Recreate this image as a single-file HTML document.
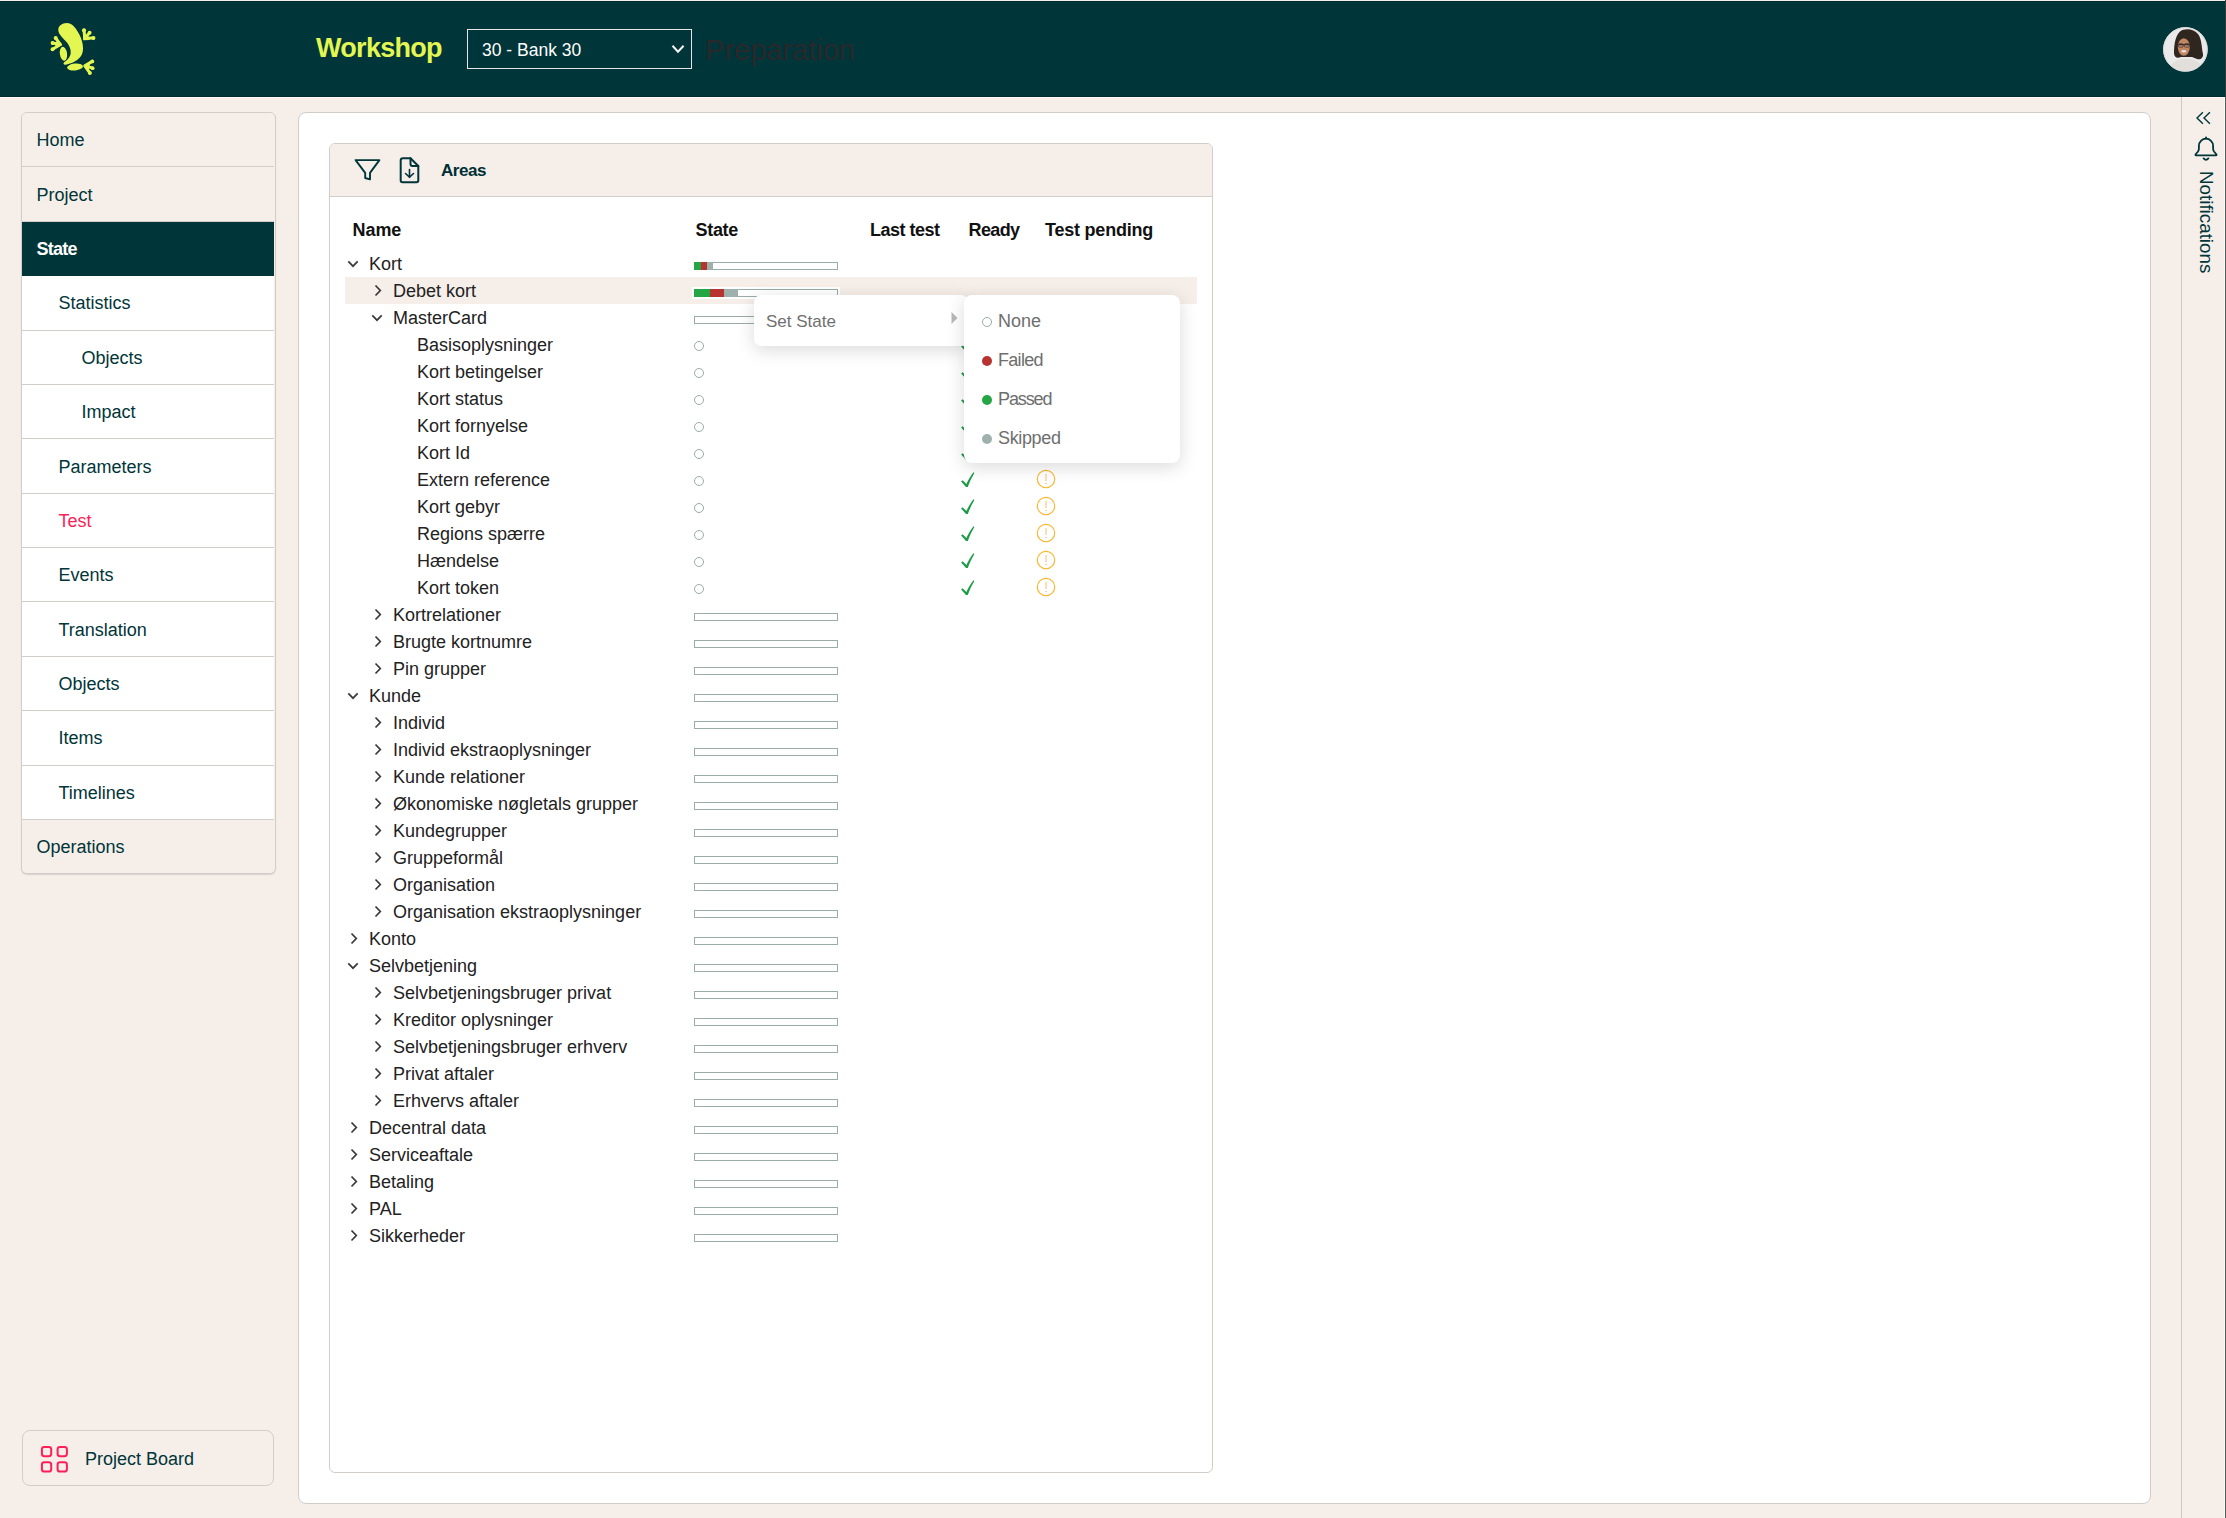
<!DOCTYPE html><html><head><meta charset="utf-8"><style>
*{box-sizing:border-box;margin:0;padding:0}
html,body{width:2226px;height:1518px;overflow:hidden;background:#f5eee9;font-family:"Liberation Sans", sans-serif;}
.a{position:absolute;white-space:nowrap}
.t{position:absolute;white-space:nowrap;line-height:1}
</style></head><body><div class="a" style="left:0;top:0;width:2226px;height:1px;background:#f2eeed"></div>
<div class="a" style="left:0;top:1px;width:2226px;height:96px;background:#003539"></div>
<div class="a" style="left:0;top:1px;width:2226px;height:1px;background:#002a2e"></div>
<div class="a" style="left:0;top:96px;width:2226px;height:1px;background:#002a2e"></div>
<div class="a" style="left:0;top:97px;width:2226px;height:1px;background:#fdf9f6"></div>
<svg class="a" style="left:45px;top:18px" width="56" height="62" viewBox="0 0 1371 1518">
<g fill="#e4f651" stroke="#e4f651">
<path stroke="none" d="M530 120 C420 120 320 190 325 300 C330 390 420 470 505 565 C595 665 645 770 625 880 C605 980 525 1040 475 1080 C435 1110 450 1150 500 1145 C640 1120 830 1040 900 900 C960 780 930 580 850 420 C780 280 680 120 530 120 Z"/>
<ellipse stroke="none" cx="452" cy="875" rx="88" ry="172" transform="rotate(-8 452 875)"/>
<ellipse stroke="none" cx="735" cy="1200" rx="195" ry="85" transform="rotate(-6 735 1200)"/>
<g stroke-width="74" stroke-linecap="round" stroke-linejoin="round" fill="none">
<path d="M380 650 L262 492 M380 650 L185 612 M380 650 L185 765"/>
<path d="M975 495 L955 300 M975 495 L1092 362 M975 495 L1185 488"/>
<path d="M975 1170 L1158 1062 M975 1170 L1165 1228 M975 1170 L1098 1345"/>
</g>
<g stroke="none">
<circle cx="262" cy="492" r="50"/><circle cx="185" cy="612" r="48"/><circle cx="185" cy="765" r="48"/>
<circle cx="955" cy="300" r="50"/><circle cx="1092" cy="362" r="48"/><circle cx="1185" cy="488" r="50"/>
<circle cx="1158" cy="1062" r="48"/><circle cx="1165" cy="1228" r="48"/><circle cx="1098" cy="1345" r="48"/>
<path d="M405 665 L300 555 L245 625 L260 735 Z"/>
<path d="M930 420 L935 545 L1100 540 L1030 410 Z"/>
<path d="M945 1170 L1085 1085 L1100 1215 L1040 1275 Z"/>
</g>
</g></svg>
<div class="t" style="left:316px;top:35.24px;font-size:27px;color:#e4f651;font-weight:bold;letter-spacing:-0.7px">Workshop</div>
<div class="a" style="left:467px;top:29px;width:225px;height:40px;border:1.5px solid #e6e6e6;"></div>
<div class="t" style="left:482px;top:41.99px;font-size:17.5px;color:#ffffff;font-weight:normal;">30 - Bank 30</div>
<svg class="a" style="left:668px;top:42px" width="20" height="14" viewBox="0 0 20 14"><polyline points="4.5,3.8 10,9.7 15.6,3.8" fill="none" stroke="#f4f4f4" stroke-width="2"/></svg>
<div class="t" style="left:705px;top:36.45px;font-size:29px;color:#29282b;font-weight:normal;">Preparation</div>
<svg class="a" style="left:2162px;top:26px" width="47" height="47" viewBox="0 0 47 47">
<defs><clipPath id="avc"><circle cx="23.4" cy="23.4" r="21.3"/></clipPath></defs>
<circle cx="23.4" cy="23.4" r="22.2" fill="#e2e2e2"/>
<g clip-path="url(#avc)">
<rect x="0" y="0" width="47" height="47" fill="#ebeaea"/>
<path d="M18 5.5 C22 2 32 2.5 36 8 C40 13 39.5 22 41 28 C41.5 32 38.5 34 35 33 L30 31 L19 31 C15 33 12 31 12 27 C12 20 13 10 18 5.5 Z" fill="#2f2620"/>
<ellipse cx="21.8" cy="21" rx="6" ry="8.8" fill="#c08764"/>
<path d="M15.8 18.6 L28 18.6" stroke="#3a2b25" stroke-width="1.4"/>
<rect x="16.2" y="17.6" width="5" height="3.6" rx="1.2" fill="none" stroke="#4a3a33" stroke-width="0.8"/>
<rect x="22.3" y="17.6" width="5" height="3.6" rx="1.2" fill="none" stroke="#4a3a33" stroke-width="0.8"/>
<ellipse cx="21.8" cy="25.3" rx="2.6" ry="1.2" fill="#e8dede"/>
<path d="M6 47 C8 37 15 32.5 23 32.8 C31 32.5 38 35 41 43 L41 47 Z" fill="#e2dfdb"/>
</g>
<circle cx="23.4" cy="23.4" r="21.9" fill="none" stroke="#dcdcdc" stroke-width="1"/>
</svg>
<div class="a" style="left:21px;top:112px;width:254.5px;height:762.32px;border:1px solid #d3cdc9;border-radius:6px;overflow:hidden;background:#f5eee9;box-shadow:0 1px 1px rgba(0,0,0,0.12)">
<div class="a" style="left:0;top:0.00px;width:252px;height:54.38px;background:#f5eee9;border-bottom:1px solid #d3cdc9;"></div>
<div class="t" style="left:14.5px;top:18.26px;font-size:18px;color:#003539;font-weight:normal;">Home</div>
<div class="a" style="left:0;top:54.38px;width:252px;height:54.38px;background:#f5eee9;border-bottom:1px solid #d3cdc9;"></div>
<div class="t" style="left:14.5px;top:72.64px;font-size:18px;color:#003539;font-weight:normal;">Project</div>
<div class="a" style="left:0;top:108.76px;width:252px;height:54.38px;background:#003539;"></div>
<div class="t" style="left:14.5px;top:127.02px;font-size:18px;color:#ffffff;font-weight:bold;letter-spacing:-0.75px;">State</div>
<div class="a" style="left:0;top:163.14px;width:252px;height:54.38px;background:#ffffff;border-bottom:1px solid #d3cdc9;"></div>
<div class="t" style="left:36.5px;top:181.40px;font-size:18px;color:#003539;font-weight:normal;">Statistics</div>
<div class="a" style="left:0;top:217.52px;width:252px;height:54.38px;background:#ffffff;border-bottom:1px solid #d3cdc9;"></div>
<div class="t" style="left:59.5px;top:235.78px;font-size:18px;color:#003539;font-weight:normal;">Objects</div>
<div class="a" style="left:0;top:271.90px;width:252px;height:54.38px;background:#ffffff;border-bottom:1px solid #d3cdc9;"></div>
<div class="t" style="left:59.5px;top:290.16px;font-size:18px;color:#003539;font-weight:normal;">Impact</div>
<div class="a" style="left:0;top:326.28px;width:252px;height:54.38px;background:#ffffff;border-bottom:1px solid #d3cdc9;"></div>
<div class="t" style="left:36.5px;top:344.54px;font-size:18px;color:#003539;font-weight:normal;">Parameters</div>
<div class="a" style="left:0;top:380.66px;width:252px;height:54.38px;background:#ffffff;border-bottom:1px solid #d3cdc9;"></div>
<div class="t" style="left:36.5px;top:398.92px;font-size:18px;color:#fc1f57;font-weight:normal;">Test</div>
<div class="a" style="left:0;top:435.04px;width:252px;height:54.38px;background:#ffffff;border-bottom:1px solid #d3cdc9;"></div>
<div class="t" style="left:36.5px;top:453.30px;font-size:18px;color:#003539;font-weight:normal;">Events</div>
<div class="a" style="left:0;top:489.42px;width:252px;height:54.38px;background:#ffffff;border-bottom:1px solid #d3cdc9;"></div>
<div class="t" style="left:36.5px;top:507.68px;font-size:18px;color:#003539;font-weight:normal;">Translation</div>
<div class="a" style="left:0;top:543.80px;width:252px;height:54.38px;background:#ffffff;border-bottom:1px solid #d3cdc9;"></div>
<div class="t" style="left:36.5px;top:562.06px;font-size:18px;color:#003539;font-weight:normal;">Objects</div>
<div class="a" style="left:0;top:598.18px;width:252px;height:54.38px;background:#ffffff;border-bottom:1px solid #d3cdc9;"></div>
<div class="t" style="left:36.5px;top:616.44px;font-size:18px;color:#003539;font-weight:normal;">Items</div>
<div class="a" style="left:0;top:652.56px;width:252px;height:54.38px;background:#ffffff;border-bottom:1px solid #d3cdc9;"></div>
<div class="t" style="left:36.5px;top:670.82px;font-size:18px;color:#003539;font-weight:normal;">Timelines</div>
<div class="a" style="left:0;top:706.94px;width:252px;height:54.38px;background:#f5eee9;"></div>
<div class="t" style="left:14.5px;top:725.20px;font-size:18px;color:#003539;font-weight:normal;">Operations</div>
</div>
<div class="a" style="left:22px;top:1430px;width:251.5px;height:55.5px;border:1px solid #d3cdc9;border-radius:8px;background:#f5eee9"></div>
<svg class="a" style="left:40px;top:1445px" width="30" height="30" viewBox="0 0 30 30"><g fill="none" stroke="#ff1f58" stroke-width="2">
<rect x="1.9" y="1.9" width="9.3" height="9.3" rx="2.4"/><rect x="17.6" y="1.9" width="9.3" height="9.3" rx="2.4"/>
<rect x="1.9" y="17.3" width="9.3" height="9.3" rx="2.4"/><rect x="17.6" y="17.3" width="9.3" height="9.3" rx="2.4"/></g></svg>
<div class="t" style="left:85px;top:1449.76px;font-size:18px;color:#003539;font-weight:normal;">Project Board</div>
<div class="a" style="left:298px;top:112px;width:1852.5px;height:1391.5px;background:#fff;border:1px solid #d3cdc9;border-radius:8px"></div>
<div class="a" style="left:2181px;top:97px;width:1px;height:1421px;background:#cfc9c5"></div>
<div class="a" style="left:2225px;top:0;width:1px;height:97px;background:#363838"></div>
<div class="a" style="left:2225px;top:97px;width:1px;height:1421px;background:#565b5b"></div>
<div class="a" style="left:2224px;top:98px;width:1px;height:1420px;background:#fcf8f5"></div>
<svg class="a" style="left:2186px;top:100px" width="40" height="30" viewBox="0 0 40 30"><g fill="none" stroke="#003539" stroke-width="1.4"><polyline points="16.9,12.2 11,18 16.9,23.8"/><polyline points="23.9,12.2 18,18 23.9,23.8"/></g></svg>
<svg class="a" style="left:2186px;top:130px" width="40" height="40" viewBox="0 0 40 40"><g fill="none" stroke="#003539" stroke-width="1.8" stroke-linejoin="round" stroke-linecap="round"><path d="M10 25.3 L30 25.3 Q31 25.3 30.3 24.3 L28 21.5 Q27.1 20.3 27.1 18.5 L27.1 15.8 A7.1 7.1 0 0 0 12.9 15.8 L12.9 18.5 Q12.9 20.3 12 21.5 L9.7 24.3 Q9 25.3 10 25.3 Z"/><path d="M20 7.3 L20 8.6"/><path d="M17.6 28.4 Q20 31.2 22.4 28.4"/></g></svg>
<div class="t" style="left:2198px;top:171px;font-size:18.8px;color:#003539;transform-origin:0 0;transform:translate(16.7px,0) rotate(90deg)">Notifications</div>
<div class="a" style="left:329px;top:143px;width:884px;height:1330px;background:#fff;border:1px solid #d3cdc9;border-radius:6px;overflow:hidden"><div class="a" style="left:0;top:0;width:882px;height:52.7px;background:#f5eee9;border-bottom:1px solid #d3cdc9"></div></div>
<svg class="a" style="left:352px;top:156px" width="30" height="28" viewBox="0 0 30 28"><path d="M3.6 4.1 L27.4 4.1 L18 16.9 L18 23.4 L13.2 22 L13.2 16.9 Z" fill="none" stroke="#003539" stroke-width="1.9" stroke-linejoin="round"/></svg>
<svg class="a" style="left:398px;top:156px" width="24" height="30" viewBox="0 0 24 30"><g fill="none" stroke="#003539" stroke-width="2" stroke-linejoin="round" stroke-linecap="round"><path d="M5 2.2 L12.5 2.2 L20.3 10 L20.3 24.5 Q20.3 26.3 18.5 26.3 L4.5 26.3 Q2.7 26.3 2.7 24.5 L2.7 4.5 Q2.7 2.2 5 2.2Z"/><path d="M12.5 2.2 L12.5 8 Q12.5 10 14.5 10 L20.3 10"/></g><g fill="none" stroke="#003539" stroke-width="1.6" stroke-linecap="round"><path d="M11.5 13.5 L11.5 21"/><path d="M7.5 17.5 L11.5 21.2 L15.5 17.5"/></g></svg>
<div class="t" style="left:441px;top:161.51px;font-size:17px;color:#002f35;font-weight:bold;letter-spacing:-0.45px">Areas</div>
<div class="t" style="left:352.5px;top:221.16px;font-size:18px;color:#111111;font-weight:bold;letter-spacing:-0.05px">Name</div>
<div class="t" style="left:695.5px;top:221.16px;font-size:18px;color:#111111;font-weight:bold;letter-spacing:-0.3px">State</div>
<div class="t" style="left:870px;top:221.16px;font-size:18px;color:#111111;font-weight:bold;letter-spacing:-0.5px">Last test</div>
<div class="t" style="left:968.5px;top:221.16px;font-size:18px;color:#111111;font-weight:bold;letter-spacing:-0.6px">Ready</div>
<div class="t" style="left:1045px;top:221.16px;font-size:18px;color:#111111;font-weight:bold;letter-spacing:-0.22px">Test pending</div>
<div class="a" style="left:345px;top:277px;width:852px;height:27px;background:#f5eee9"></div>
<div class="t" style="left:369px;top:254.50px;font-size:18px;color:#222222;font-weight:normal;">Kort</div>
<svg class="a" style="left:347.3px;top:259.8px" width="12" height="8" viewBox="0 0 12 8"><polyline points="1.3,1.4 6,6.2 10.7,1.4" fill="none" stroke="#383838" stroke-width="1.7"/></svg>
<div class="a" style="left:694px;top:262px;width:144px;height:8px;border:1px solid #9aaca8;background:#fff;"><div class="a" style="left:-1px;top:-1px;width:7px;height:8px;background:#24a645"></div><div class="a" style="left:6px;top:-1px;width:6px;height:8px;background:#b83230"></div><div class="a" style="left:12px;top:-1px;width:6px;height:8px;background:#9fb1ad"></div></div>
<div class="t" style="left:393px;top:281.50px;font-size:18px;color:#222222;font-weight:normal;">Debet kort</div>
<svg class="a" style="left:374px;top:284px" width="9" height="13" viewBox="0 0 9 13"><polyline points="1.5,1.5 6.3,6.5 1.5,11.5" fill="none" stroke="#383838" stroke-width="1.7"/></svg>
<div class="a" style="left:694px;top:289px;width:144px;height:8px;border:1px solid #9aaca8;background:#fff;outline:2px solid #fff;"><div class="a" style="left:-1px;top:-1px;width:16px;height:8px;background:#24a645"></div><div class="a" style="left:15px;top:-1px;width:14px;height:8px;background:#b83230"></div><div class="a" style="left:29px;top:-1px;width:14px;height:8px;background:#9fb1ad"></div></div>
<div class="t" style="left:393px;top:308.50px;font-size:18px;color:#222222;font-weight:normal;">MasterCard</div>
<svg class="a" style="left:371.3px;top:313.8px" width="12" height="8" viewBox="0 0 12 8"><polyline points="1.3,1.4 6,6.2 10.7,1.4" fill="none" stroke="#383838" stroke-width="1.7"/></svg>
<div class="a" style="left:694px;top:316px;width:144px;height:8px;border:1px solid #9aaca8;background:#fff;"></div>
<div class="t" style="left:417px;top:335.50px;font-size:18px;color:#222222;font-weight:normal;">Basisoplysninger</div>
<div class="a" style="left:694px;top:341.2px;width:10px;height:10px;border:1px solid #9aaca8;border-radius:50%"></div>
<svg class="a" style="left:961px;top:337px" width="15" height="16" viewBox="0 0 15 16"><path d="M0.1 9.5 L1.6 8.3 L5.4 12.1 C7.2 8.1 9.6 3.9 12.5 0.3 L13.4 0.9 C10.9 4.9 8.7 9.7 6.8 15.1 L5 15.1 Z" fill="#1d9c48"/></svg>
<svg class="a" style="left:1036.1px;top:334.1px" width="20" height="20" viewBox="0 0 20 20"><circle cx="10" cy="10" r="8.7" fill="none" stroke="#f8b62a" stroke-width="1.15"/><path d="M10 5 L10 12" stroke="#f8bf6e" stroke-width="1" /><circle cx="10" cy="14.5" r="0.75" fill="#f8bf6e"/></svg>
<div class="t" style="left:417px;top:362.50px;font-size:18px;color:#222222;font-weight:normal;">Kort betingelser</div>
<div class="a" style="left:694px;top:368.2px;width:10px;height:10px;border:1px solid #9aaca8;border-radius:50%"></div>
<svg class="a" style="left:961px;top:364px" width="15" height="16" viewBox="0 0 15 16"><path d="M0.1 9.5 L1.6 8.3 L5.4 12.1 C7.2 8.1 9.6 3.9 12.5 0.3 L13.4 0.9 C10.9 4.9 8.7 9.7 6.8 15.1 L5 15.1 Z" fill="#1d9c48"/></svg>
<svg class="a" style="left:1036.1px;top:361.1px" width="20" height="20" viewBox="0 0 20 20"><circle cx="10" cy="10" r="8.7" fill="none" stroke="#f8b62a" stroke-width="1.15"/><path d="M10 5 L10 12" stroke="#f8bf6e" stroke-width="1" /><circle cx="10" cy="14.5" r="0.75" fill="#f8bf6e"/></svg>
<div class="t" style="left:417px;top:389.50px;font-size:18px;color:#222222;font-weight:normal;">Kort status</div>
<div class="a" style="left:694px;top:395.2px;width:10px;height:10px;border:1px solid #9aaca8;border-radius:50%"></div>
<svg class="a" style="left:961px;top:391px" width="15" height="16" viewBox="0 0 15 16"><path d="M0.1 9.5 L1.6 8.3 L5.4 12.1 C7.2 8.1 9.6 3.9 12.5 0.3 L13.4 0.9 C10.9 4.9 8.7 9.7 6.8 15.1 L5 15.1 Z" fill="#1d9c48"/></svg>
<svg class="a" style="left:1036.1px;top:388.1px" width="20" height="20" viewBox="0 0 20 20"><circle cx="10" cy="10" r="8.7" fill="none" stroke="#f8b62a" stroke-width="1.15"/><path d="M10 5 L10 12" stroke="#f8bf6e" stroke-width="1" /><circle cx="10" cy="14.5" r="0.75" fill="#f8bf6e"/></svg>
<div class="t" style="left:417px;top:416.50px;font-size:18px;color:#222222;font-weight:normal;">Kort fornyelse</div>
<div class="a" style="left:694px;top:422.2px;width:10px;height:10px;border:1px solid #9aaca8;border-radius:50%"></div>
<svg class="a" style="left:961px;top:418px" width="15" height="16" viewBox="0 0 15 16"><path d="M0.1 9.5 L1.6 8.3 L5.4 12.1 C7.2 8.1 9.6 3.9 12.5 0.3 L13.4 0.9 C10.9 4.9 8.7 9.7 6.8 15.1 L5 15.1 Z" fill="#1d9c48"/></svg>
<svg class="a" style="left:1036.1px;top:415.1px" width="20" height="20" viewBox="0 0 20 20"><circle cx="10" cy="10" r="8.7" fill="none" stroke="#f8b62a" stroke-width="1.15"/><path d="M10 5 L10 12" stroke="#f8bf6e" stroke-width="1" /><circle cx="10" cy="14.5" r="0.75" fill="#f8bf6e"/></svg>
<div class="t" style="left:417px;top:443.50px;font-size:18px;color:#222222;font-weight:normal;">Kort Id</div>
<div class="a" style="left:694px;top:449.2px;width:10px;height:10px;border:1px solid #9aaca8;border-radius:50%"></div>
<svg class="a" style="left:961px;top:445px" width="15" height="16" viewBox="0 0 15 16"><path d="M0.1 9.5 L1.6 8.3 L5.4 12.1 C7.2 8.1 9.6 3.9 12.5 0.3 L13.4 0.9 C10.9 4.9 8.7 9.7 6.8 15.1 L5 15.1 Z" fill="#1d9c48"/></svg>
<svg class="a" style="left:1036.1px;top:442.1px" width="20" height="20" viewBox="0 0 20 20"><circle cx="10" cy="10" r="8.7" fill="none" stroke="#f8b62a" stroke-width="1.15"/><path d="M10 5 L10 12" stroke="#f8bf6e" stroke-width="1" /><circle cx="10" cy="14.5" r="0.75" fill="#f8bf6e"/></svg>
<div class="t" style="left:417px;top:470.50px;font-size:18px;color:#222222;font-weight:normal;">Extern reference</div>
<div class="a" style="left:694px;top:476.2px;width:10px;height:10px;border:1px solid #9aaca8;border-radius:50%"></div>
<svg class="a" style="left:961px;top:472px" width="15" height="16" viewBox="0 0 15 16"><path d="M0.1 9.5 L1.6 8.3 L5.4 12.1 C7.2 8.1 9.6 3.9 12.5 0.3 L13.4 0.9 C10.9 4.9 8.7 9.7 6.8 15.1 L5 15.1 Z" fill="#1d9c48"/></svg>
<svg class="a" style="left:1036.1px;top:469.1px" width="20" height="20" viewBox="0 0 20 20"><circle cx="10" cy="10" r="8.7" fill="none" stroke="#f8b62a" stroke-width="1.15"/><path d="M10 5 L10 12" stroke="#f8bf6e" stroke-width="1" /><circle cx="10" cy="14.5" r="0.75" fill="#f8bf6e"/></svg>
<div class="t" style="left:417px;top:497.50px;font-size:18px;color:#222222;font-weight:normal;">Kort gebyr</div>
<div class="a" style="left:694px;top:503.2px;width:10px;height:10px;border:1px solid #9aaca8;border-radius:50%"></div>
<svg class="a" style="left:961px;top:499px" width="15" height="16" viewBox="0 0 15 16"><path d="M0.1 9.5 L1.6 8.3 L5.4 12.1 C7.2 8.1 9.6 3.9 12.5 0.3 L13.4 0.9 C10.9 4.9 8.7 9.7 6.8 15.1 L5 15.1 Z" fill="#1d9c48"/></svg>
<svg class="a" style="left:1036.1px;top:496.1px" width="20" height="20" viewBox="0 0 20 20"><circle cx="10" cy="10" r="8.7" fill="none" stroke="#f8b62a" stroke-width="1.15"/><path d="M10 5 L10 12" stroke="#f8bf6e" stroke-width="1" /><circle cx="10" cy="14.5" r="0.75" fill="#f8bf6e"/></svg>
<div class="t" style="left:417px;top:524.50px;font-size:18px;color:#222222;font-weight:normal;">Regions spærre</div>
<div class="a" style="left:694px;top:530.2px;width:10px;height:10px;border:1px solid #9aaca8;border-radius:50%"></div>
<svg class="a" style="left:961px;top:526px" width="15" height="16" viewBox="0 0 15 16"><path d="M0.1 9.5 L1.6 8.3 L5.4 12.1 C7.2 8.1 9.6 3.9 12.5 0.3 L13.4 0.9 C10.9 4.9 8.7 9.7 6.8 15.1 L5 15.1 Z" fill="#1d9c48"/></svg>
<svg class="a" style="left:1036.1px;top:523.1px" width="20" height="20" viewBox="0 0 20 20"><circle cx="10" cy="10" r="8.7" fill="none" stroke="#f8b62a" stroke-width="1.15"/><path d="M10 5 L10 12" stroke="#f8bf6e" stroke-width="1" /><circle cx="10" cy="14.5" r="0.75" fill="#f8bf6e"/></svg>
<div class="t" style="left:417px;top:551.50px;font-size:18px;color:#222222;font-weight:normal;">Hændelse</div>
<div class="a" style="left:694px;top:557.2px;width:10px;height:10px;border:1px solid #9aaca8;border-radius:50%"></div>
<svg class="a" style="left:961px;top:553px" width="15" height="16" viewBox="0 0 15 16"><path d="M0.1 9.5 L1.6 8.3 L5.4 12.1 C7.2 8.1 9.6 3.9 12.5 0.3 L13.4 0.9 C10.9 4.9 8.7 9.7 6.8 15.1 L5 15.1 Z" fill="#1d9c48"/></svg>
<svg class="a" style="left:1036.1px;top:550.1px" width="20" height="20" viewBox="0 0 20 20"><circle cx="10" cy="10" r="8.7" fill="none" stroke="#f8b62a" stroke-width="1.15"/><path d="M10 5 L10 12" stroke="#f8bf6e" stroke-width="1" /><circle cx="10" cy="14.5" r="0.75" fill="#f8bf6e"/></svg>
<div class="t" style="left:417px;top:578.50px;font-size:18px;color:#222222;font-weight:normal;">Kort token</div>
<div class="a" style="left:694px;top:584.2px;width:10px;height:10px;border:1px solid #9aaca8;border-radius:50%"></div>
<svg class="a" style="left:961px;top:580px" width="15" height="16" viewBox="0 0 15 16"><path d="M0.1 9.5 L1.6 8.3 L5.4 12.1 C7.2 8.1 9.6 3.9 12.5 0.3 L13.4 0.9 C10.9 4.9 8.7 9.7 6.8 15.1 L5 15.1 Z" fill="#1d9c48"/></svg>
<svg class="a" style="left:1036.1px;top:577.1px" width="20" height="20" viewBox="0 0 20 20"><circle cx="10" cy="10" r="8.7" fill="none" stroke="#f8b62a" stroke-width="1.15"/><path d="M10 5 L10 12" stroke="#f8bf6e" stroke-width="1" /><circle cx="10" cy="14.5" r="0.75" fill="#f8bf6e"/></svg>
<div class="t" style="left:393px;top:605.50px;font-size:18px;color:#222222;font-weight:normal;">Kortrelationer</div>
<svg class="a" style="left:374px;top:608px" width="9" height="13" viewBox="0 0 9 13"><polyline points="1.5,1.5 6.3,6.5 1.5,11.5" fill="none" stroke="#383838" stroke-width="1.7"/></svg>
<div class="a" style="left:694px;top:613px;width:144px;height:8px;border:1px solid #9aaca8;background:#fff;"></div>
<div class="t" style="left:393px;top:632.50px;font-size:18px;color:#222222;font-weight:normal;">Brugte kortnumre</div>
<svg class="a" style="left:374px;top:635px" width="9" height="13" viewBox="0 0 9 13"><polyline points="1.5,1.5 6.3,6.5 1.5,11.5" fill="none" stroke="#383838" stroke-width="1.7"/></svg>
<div class="a" style="left:694px;top:640px;width:144px;height:8px;border:1px solid #9aaca8;background:#fff;"></div>
<div class="t" style="left:393px;top:659.50px;font-size:18px;color:#222222;font-weight:normal;">Pin grupper</div>
<svg class="a" style="left:374px;top:662px" width="9" height="13" viewBox="0 0 9 13"><polyline points="1.5,1.5 6.3,6.5 1.5,11.5" fill="none" stroke="#383838" stroke-width="1.7"/></svg>
<div class="a" style="left:694px;top:667px;width:144px;height:8px;border:1px solid #9aaca8;background:#fff;"></div>
<div class="t" style="left:369px;top:686.50px;font-size:18px;color:#222222;font-weight:normal;">Kunde</div>
<svg class="a" style="left:347.3px;top:691.8px" width="12" height="8" viewBox="0 0 12 8"><polyline points="1.3,1.4 6,6.2 10.7,1.4" fill="none" stroke="#383838" stroke-width="1.7"/></svg>
<div class="a" style="left:694px;top:694px;width:144px;height:8px;border:1px solid #9aaca8;background:#fff;"></div>
<div class="t" style="left:393px;top:713.50px;font-size:18px;color:#222222;font-weight:normal;">Individ</div>
<svg class="a" style="left:374px;top:716px" width="9" height="13" viewBox="0 0 9 13"><polyline points="1.5,1.5 6.3,6.5 1.5,11.5" fill="none" stroke="#383838" stroke-width="1.7"/></svg>
<div class="a" style="left:694px;top:721px;width:144px;height:8px;border:1px solid #9aaca8;background:#fff;"></div>
<div class="t" style="left:393px;top:740.50px;font-size:18px;color:#222222;font-weight:normal;">Individ ekstraoplysninger</div>
<svg class="a" style="left:374px;top:743px" width="9" height="13" viewBox="0 0 9 13"><polyline points="1.5,1.5 6.3,6.5 1.5,11.5" fill="none" stroke="#383838" stroke-width="1.7"/></svg>
<div class="a" style="left:694px;top:748px;width:144px;height:8px;border:1px solid #9aaca8;background:#fff;"></div>
<div class="t" style="left:393px;top:767.50px;font-size:18px;color:#222222;font-weight:normal;">Kunde relationer</div>
<svg class="a" style="left:374px;top:770px" width="9" height="13" viewBox="0 0 9 13"><polyline points="1.5,1.5 6.3,6.5 1.5,11.5" fill="none" stroke="#383838" stroke-width="1.7"/></svg>
<div class="a" style="left:694px;top:775px;width:144px;height:8px;border:1px solid #9aaca8;background:#fff;"></div>
<div class="t" style="left:393px;top:794.50px;font-size:18px;color:#222222;font-weight:normal;">Økonomiske nøgletals grupper</div>
<svg class="a" style="left:374px;top:797px" width="9" height="13" viewBox="0 0 9 13"><polyline points="1.5,1.5 6.3,6.5 1.5,11.5" fill="none" stroke="#383838" stroke-width="1.7"/></svg>
<div class="a" style="left:694px;top:802px;width:144px;height:8px;border:1px solid #9aaca8;background:#fff;"></div>
<div class="t" style="left:393px;top:821.50px;font-size:18px;color:#222222;font-weight:normal;">Kundegrupper</div>
<svg class="a" style="left:374px;top:824px" width="9" height="13" viewBox="0 0 9 13"><polyline points="1.5,1.5 6.3,6.5 1.5,11.5" fill="none" stroke="#383838" stroke-width="1.7"/></svg>
<div class="a" style="left:694px;top:829px;width:144px;height:8px;border:1px solid #9aaca8;background:#fff;"></div>
<div class="t" style="left:393px;top:848.50px;font-size:18px;color:#222222;font-weight:normal;">Gruppeformål</div>
<svg class="a" style="left:374px;top:851px" width="9" height="13" viewBox="0 0 9 13"><polyline points="1.5,1.5 6.3,6.5 1.5,11.5" fill="none" stroke="#383838" stroke-width="1.7"/></svg>
<div class="a" style="left:694px;top:856px;width:144px;height:8px;border:1px solid #9aaca8;background:#fff;"></div>
<div class="t" style="left:393px;top:875.50px;font-size:18px;color:#222222;font-weight:normal;">Organisation</div>
<svg class="a" style="left:374px;top:878px" width="9" height="13" viewBox="0 0 9 13"><polyline points="1.5,1.5 6.3,6.5 1.5,11.5" fill="none" stroke="#383838" stroke-width="1.7"/></svg>
<div class="a" style="left:694px;top:883px;width:144px;height:8px;border:1px solid #9aaca8;background:#fff;"></div>
<div class="t" style="left:393px;top:902.50px;font-size:18px;color:#222222;font-weight:normal;">Organisation ekstraoplysninger</div>
<svg class="a" style="left:374px;top:905px" width="9" height="13" viewBox="0 0 9 13"><polyline points="1.5,1.5 6.3,6.5 1.5,11.5" fill="none" stroke="#383838" stroke-width="1.7"/></svg>
<div class="a" style="left:694px;top:910px;width:144px;height:8px;border:1px solid #9aaca8;background:#fff;"></div>
<div class="t" style="left:369px;top:929.50px;font-size:18px;color:#222222;font-weight:normal;">Konto</div>
<svg class="a" style="left:350px;top:932px" width="9" height="13" viewBox="0 0 9 13"><polyline points="1.5,1.5 6.3,6.5 1.5,11.5" fill="none" stroke="#383838" stroke-width="1.7"/></svg>
<div class="a" style="left:694px;top:937px;width:144px;height:8px;border:1px solid #9aaca8;background:#fff;"></div>
<div class="t" style="left:369px;top:956.50px;font-size:18px;color:#222222;font-weight:normal;">Selvbetjening</div>
<svg class="a" style="left:347.3px;top:961.8px" width="12" height="8" viewBox="0 0 12 8"><polyline points="1.3,1.4 6,6.2 10.7,1.4" fill="none" stroke="#383838" stroke-width="1.7"/></svg>
<div class="a" style="left:694px;top:964px;width:144px;height:8px;border:1px solid #9aaca8;background:#fff;"></div>
<div class="t" style="left:393px;top:983.50px;font-size:18px;color:#222222;font-weight:normal;">Selvbetjeningsbruger privat</div>
<svg class="a" style="left:374px;top:986px" width="9" height="13" viewBox="0 0 9 13"><polyline points="1.5,1.5 6.3,6.5 1.5,11.5" fill="none" stroke="#383838" stroke-width="1.7"/></svg>
<div class="a" style="left:694px;top:991px;width:144px;height:8px;border:1px solid #9aaca8;background:#fff;"></div>
<div class="t" style="left:393px;top:1010.50px;font-size:18px;color:#222222;font-weight:normal;">Kreditor oplysninger</div>
<svg class="a" style="left:374px;top:1013px" width="9" height="13" viewBox="0 0 9 13"><polyline points="1.5,1.5 6.3,6.5 1.5,11.5" fill="none" stroke="#383838" stroke-width="1.7"/></svg>
<div class="a" style="left:694px;top:1018px;width:144px;height:8px;border:1px solid #9aaca8;background:#fff;"></div>
<div class="t" style="left:393px;top:1037.50px;font-size:18px;color:#222222;font-weight:normal;">Selvbetjeningsbruger erhverv</div>
<svg class="a" style="left:374px;top:1040px" width="9" height="13" viewBox="0 0 9 13"><polyline points="1.5,1.5 6.3,6.5 1.5,11.5" fill="none" stroke="#383838" stroke-width="1.7"/></svg>
<div class="a" style="left:694px;top:1045px;width:144px;height:8px;border:1px solid #9aaca8;background:#fff;"></div>
<div class="t" style="left:393px;top:1064.50px;font-size:18px;color:#222222;font-weight:normal;">Privat aftaler</div>
<svg class="a" style="left:374px;top:1067px" width="9" height="13" viewBox="0 0 9 13"><polyline points="1.5,1.5 6.3,6.5 1.5,11.5" fill="none" stroke="#383838" stroke-width="1.7"/></svg>
<div class="a" style="left:694px;top:1072px;width:144px;height:8px;border:1px solid #9aaca8;background:#fff;"></div>
<div class="t" style="left:393px;top:1091.50px;font-size:18px;color:#222222;font-weight:normal;">Erhvervs aftaler</div>
<svg class="a" style="left:374px;top:1094px" width="9" height="13" viewBox="0 0 9 13"><polyline points="1.5,1.5 6.3,6.5 1.5,11.5" fill="none" stroke="#383838" stroke-width="1.7"/></svg>
<div class="a" style="left:694px;top:1099px;width:144px;height:8px;border:1px solid #9aaca8;background:#fff;"></div>
<div class="t" style="left:369px;top:1118.50px;font-size:18px;color:#222222;font-weight:normal;">Decentral data</div>
<svg class="a" style="left:350px;top:1121px" width="9" height="13" viewBox="0 0 9 13"><polyline points="1.5,1.5 6.3,6.5 1.5,11.5" fill="none" stroke="#383838" stroke-width="1.7"/></svg>
<div class="a" style="left:694px;top:1126px;width:144px;height:8px;border:1px solid #9aaca8;background:#fff;"></div>
<div class="t" style="left:369px;top:1145.50px;font-size:18px;color:#222222;font-weight:normal;">Serviceaftale</div>
<svg class="a" style="left:350px;top:1148px" width="9" height="13" viewBox="0 0 9 13"><polyline points="1.5,1.5 6.3,6.5 1.5,11.5" fill="none" stroke="#383838" stroke-width="1.7"/></svg>
<div class="a" style="left:694px;top:1153px;width:144px;height:8px;border:1px solid #9aaca8;background:#fff;"></div>
<div class="t" style="left:369px;top:1172.50px;font-size:18px;color:#222222;font-weight:normal;">Betaling</div>
<svg class="a" style="left:350px;top:1175px" width="9" height="13" viewBox="0 0 9 13"><polyline points="1.5,1.5 6.3,6.5 1.5,11.5" fill="none" stroke="#383838" stroke-width="1.7"/></svg>
<div class="a" style="left:694px;top:1180px;width:144px;height:8px;border:1px solid #9aaca8;background:#fff;"></div>
<div class="t" style="left:369px;top:1199.50px;font-size:18px;color:#222222;font-weight:normal;">PAL</div>
<svg class="a" style="left:350px;top:1202px" width="9" height="13" viewBox="0 0 9 13"><polyline points="1.5,1.5 6.3,6.5 1.5,11.5" fill="none" stroke="#383838" stroke-width="1.7"/></svg>
<div class="a" style="left:694px;top:1207px;width:144px;height:8px;border:1px solid #9aaca8;background:#fff;"></div>
<div class="t" style="left:369px;top:1226.50px;font-size:18px;color:#222222;font-weight:normal;">Sikkerheder</div>
<svg class="a" style="left:350px;top:1229px" width="9" height="13" viewBox="0 0 9 13"><polyline points="1.5,1.5 6.3,6.5 1.5,11.5" fill="none" stroke="#383838" stroke-width="1.7"/></svg>
<div class="a" style="left:694px;top:1234px;width:144px;height:8px;border:1px solid #9aaca8;background:#fff;"></div>
<div class="a" style="left:754px;top:295px;width:214px;height:51px;background:#fff;border-radius:7px;box-shadow:0 4px 18px rgba(0,0,0,0.15)"></div>
<div class="t" style="left:766px;top:312.61px;font-size:17px;color:#707070;font-weight:normal;">Set State</div>
<svg class="a" style="left:950px;top:311px" width="9" height="14" viewBox="0 0 9 14"><path d="M1.5 1 L7.5 7 L1.5 13 Z" fill="#b8b8b8"/></svg>
<div class="a" style="left:964px;top:295px;width:216px;height:167.5px;background:#fff;border-radius:8px;box-shadow:0 4px 18px rgba(0,0,0,0.15)"></div>
<div class="a" style="left:982px;top:316.8px;width:10px;height:10px;border:1px solid #9aaca8;border-radius:50%"></div>
<div class="t" style="left:998px;top:311.76px;font-size:18px;color:#6e6e6e;font-weight:normal;letter-spacing:0px">None</div>
<div class="a" style="left:982px;top:355.90000000000003px;width:10px;height:10px;background:#b83230;border-radius:50%"></div>
<div class="t" style="left:998px;top:350.76px;font-size:18px;color:#6e6e6e;font-weight:normal;letter-spacing:-0.7px">Failed</div>
<div class="a" style="left:982px;top:395.0px;width:10px;height:10px;background:#24a645;border-radius:50%"></div>
<div class="t" style="left:998px;top:389.76px;font-size:18px;color:#6e6e6e;font-weight:normal;letter-spacing:-1.1px">Passed</div>
<div class="a" style="left:982px;top:434.1px;width:10px;height:10px;background:#9fb1ad;border-radius:50%"></div>
<div class="t" style="left:998px;top:428.76px;font-size:18px;color:#6e6e6e;font-weight:normal;letter-spacing:-0.35px">Skipped</div></body></html>
